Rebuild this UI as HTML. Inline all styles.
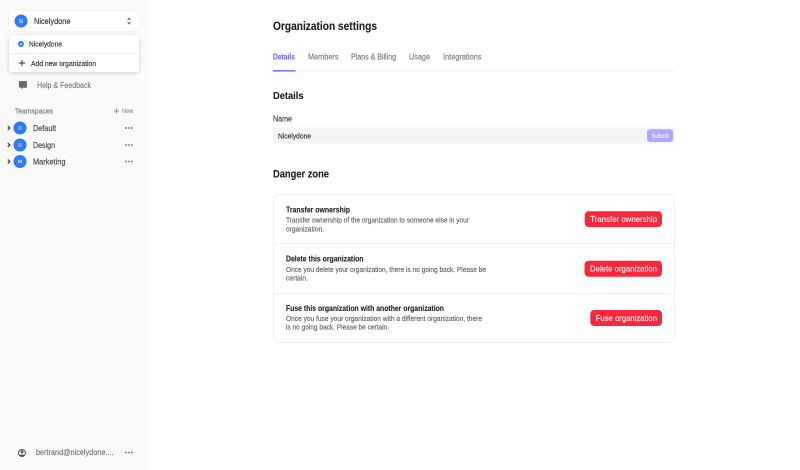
<!DOCTYPE html>
<html><head><meta charset="utf-8"><style>
html,body{margin:0;padding:0;background:#fff;width:800px;height:470px;overflow:hidden}
svg{display:block;filter:blur(.2px)}
text{font-family:"Liberation Sans",sans-serif;fill:currentColor;stroke:currentColor;stroke-width:.16}
.b{font-weight:700;stroke-width:.1}
</style></head><body>
<svg width="800" height="470" viewBox="0 0 800 470" xmlns="http://www.w3.org/2000/svg">
<defs>
<filter id="s" x="-10%" y="-30%" width="120%" height="170%"><feDropShadow dx="0" dy="1" stdDeviation="2" flood-color="#000" flood-opacity=".16"/></filter>
<filter id="s2" x="-10%" y="-30%" width="120%" height="170%"><feDropShadow dx="0" dy="0" stdDeviation="1.2" flood-color="#000" flood-opacity=".07"/></filter>
</defs>
<rect width="800" height="470" fill="#fff"/>
<rect width="148" height="470" fill="#fafafa"/>

<!-- org switcher -->
<rect x="9" y="11" width="130" height="20" rx="6" fill="#fff" filter="url(#s2)"/>
<circle cx="21" cy="21" r="6.5" fill="#2e7bf6"/>
<text x="21" y="22.8" font-size="5" color="#dce9ff" text-anchor="middle">N</text>
<text x="34" y="24" font-size="8.500" color="#333" textLength="36.500" lengthAdjust="spacingAndGlyphs">Nicelydone</text>
<path d="M127.600 20l1.400-1.900 1.400 1.900M127.600 22l1.400 1.900 1.400-1.900" fill="none" stroke="#555" stroke-width=".9"/>

<!-- dropdown -->
<rect x="9" y="35" width="130" height="37" rx="3" fill="#fff" filter="url(#s)"/>
<line x1="9" y1="53.500" x2="139" y2="53.500" stroke="#f0f0f0"/>
<circle cx="21" cy="44" r="3" fill="#2e7bf6"/>
<path d="M19.700 44l1 1 1.700-1.900" fill="none" stroke="#fff" stroke-width=".7"/>
<text x="29" y="46.500" font-size="7.500" color="#333" textLength="33" lengthAdjust="spacingAndGlyphs">Nicelydone</text>
<path d="M22 60v6M19 63h6" stroke="#222" stroke-width=".9" fill="none"/>
<text x="31" y="66" font-size="7.500" color="#333" textLength="65" lengthAdjust="spacingAndGlyphs">Add new organization</text>

<!-- help -->
<path d="M20 81h6q1 0 1 1v4.800q0 1-1 1h-2.800l-1.600 1.600v-1.600h-1.600q-1 0-1-1v-4.800q0-1 1-1z" fill="#6a6a6a"/>
<text x="37" y="88" font-size="8" color="#808080" textLength="54" lengthAdjust="spacingAndGlyphs">Help &amp; Feedback</text>

<!-- teamspaces -->
<text x="15" y="113.500" font-size="7.200" color="#777" textLength="38" lengthAdjust="spacingAndGlyphs">Teamspaces</text>
<path d="M116.500 108.500v5M114 111h5" stroke="#777" stroke-width=".8" fill="none"/>
<text x="122" y="113" font-size="6.200" color="#999" textLength="11" lengthAdjust="spacingAndGlyphs">New</text>

<g fill="none" stroke="#222" stroke-width="1.100">
<path d="M7.800 126l2 2-2 2"/><path d="M7.800 143l2 2-2 2"/><path d="M7.800 159.500l2 2-2 2"/>
</g>
<circle cx="20" cy="128" r="6.500" fill="#2e7bf6"/>
<circle cx="20" cy="145" r="6.500" fill="#2e7bf6"/>
<circle cx="20" cy="161.500" r="6.500" fill="#2e7bf6"/>
<g font-size="4.800" color="#dce9ff" text-anchor="middle">
<text x="20" y="129.700">D</text><text x="20" y="146.700">D</text><text x="20" y="163.200">M</text>
</g>
<g font-size="8.500" color="#444">
<text x="33" y="131" textLength="23" lengthAdjust="spacingAndGlyphs">Default</text>
<text x="33" y="148" textLength="22" lengthAdjust="spacingAndGlyphs">Design</text>
<text x="33" y="164.500" textLength="32.500" lengthAdjust="spacingAndGlyphs">Marketing</text>
</g>
<g fill="#666">
<circle cx="126" cy="128" r=".9"/><circle cx="129" cy="128" r=".9"/><circle cx="132" cy="128" r=".9"/>
<circle cx="126" cy="145" r=".9"/><circle cx="129" cy="145" r=".9"/><circle cx="132" cy="145" r=".9"/>
<circle cx="126" cy="161.500" r=".9"/><circle cx="129" cy="161.500" r=".9"/><circle cx="132" cy="161.500" r=".9"/>
<circle cx="126" cy="452.500" r=".9"/><circle cx="129" cy="452.500" r=".9"/><circle cx="132" cy="452.500" r=".9"/>
</g>

<!-- user -->
<circle cx="22" cy="453" r="3.500" fill="none" stroke="#555" stroke-width="1"/>
<circle cx="22" cy="451.800" r="1.500" fill="#555"/>
<path d="M19.500 455.500q2.500-2.400 5 0l-1 1h-3z" fill="#555"/>
<text x="36" y="455" font-size="8" color="#777" textLength="77.500" lengthAdjust="spacingAndGlyphs">bertrand@nicelydone....</text>

<!-- main header -->
<text x="273" y="30" class="b" font-size="11.500" color="#1c1c1e" textLength="104" lengthAdjust="spacingAndGlyphs">Organization settings</text>
<g font-size="8" color="#7d7d7d">
<text x="273" y="59.500" style="color:#6c63f2" class="b" textLength="22" lengthAdjust="spacingAndGlyphs">Details</text>
<text x="308" y="59.500" textLength="30.500" lengthAdjust="spacingAndGlyphs">Members</text>
<text x="351" y="59.500" textLength="45" lengthAdjust="spacingAndGlyphs">Plans &amp; Billing</text>
<text x="409" y="59.500" textLength="21" lengthAdjust="spacingAndGlyphs">Usage</text>
<text x="443" y="59.500" textLength="38.500" lengthAdjust="spacingAndGlyphs">Integrations</text>
</g>
<rect x="273" y="70.500" width="402" height="1" fill="#f2f2f4"/>
<rect x="273" y="70" width="22.500" height="1.600" fill="#7c74f5"/>

<text x="273" y="99" class="b" font-size="10.500" color="#1c1c1e" textLength="30.500" lengthAdjust="spacingAndGlyphs">Details</text>
<text x="273" y="121.500" font-size="8" color="#444" textLength="19" lengthAdjust="spacingAndGlyphs">Name</text>
<rect x="273" y="127.500" width="402" height="16" rx="3" fill="#f3f4f6"/>
<text x="278" y="138.300" font-size="7.500" color="#333" textLength="33" lengthAdjust="spacingAndGlyphs">Nicelydone</text>
<rect x="647" y="129.300" width="26" height="12.700" rx="3" fill="#aca8fb"/>
<text x="651.500" y="138" font-size="6.200" class="b" color="#e8e7ff" textLength="17.500" lengthAdjust="spacingAndGlyphs">Submit</text>

<text x="273" y="177.500" class="b" font-size="11" color="#1c1c1e" textLength="56" lengthAdjust="spacingAndGlyphs">Danger zone</text>

<!-- card -->
<rect x="273.500" y="194.500" width="401" height="148" rx="6" fill="#fff" stroke="#f0f0f2"/>
<line x1="274" y1="243.500" x2="674" y2="243.500" stroke="#f2f2f4"/>
<line x1="274" y1="293.500" x2="674" y2="293.500" stroke="#f2f2f4"/>

<text x="286" y="212.700" class="b" font-size="7.800" color="#222" textLength="64" lengthAdjust="spacingAndGlyphs">Transfer ownership</text>
<text x="286" y="222.700" font-size="7.500" color="#666" textLength="183" lengthAdjust="spacingAndGlyphs">Transfer ownership of the organization to someone else in your</text>
<text x="286" y="231.500" font-size="7.500" color="#666" textLength="38" lengthAdjust="spacingAndGlyphs">organization.</text>

<text x="286" y="261.700" class="b" font-size="7.800" color="#222" textLength="77.500" lengthAdjust="spacingAndGlyphs">Delete this organization</text>
<text x="286" y="271.800" font-size="7.500" color="#666" textLength="200" lengthAdjust="spacingAndGlyphs">Once you delete your organization, there is no going back. Please be</text>
<text x="286" y="280.500" font-size="7.500" color="#666" textLength="22" lengthAdjust="spacingAndGlyphs">certain.</text>

<text x="286" y="311" class="b" font-size="7.800" color="#222" textLength="158" lengthAdjust="spacingAndGlyphs">Fuse this organization with another organization</text>
<text x="286" y="321" font-size="7.500" color="#666" textLength="196" lengthAdjust="spacingAndGlyphs">Once you fuse your organization with a different organization, there</text>
<text x="286" y="329.700" font-size="7.500" color="#666" textLength="103" lengthAdjust="spacingAndGlyphs">is no going back. Please be certain.</text>

<rect x="584.700" y="211.300" width="77.300" height="15.700" rx="4" fill="#f7283c"/>
<text x="590.300" y="222" font-size="8.500" color="#ffe6e8" textLength="66.700" lengthAdjust="spacingAndGlyphs">Transfer ownership</text>
<rect x="584.500" y="260.700" width="77.500" height="16" rx="4" fill="#f7283c"/>
<text x="590" y="271.500" font-size="8.500" color="#ffe6e8" textLength="67" lengthAdjust="spacingAndGlyphs">Delete organization</text>
<rect x="590.300" y="310" width="71.700" height="16" rx="4" fill="#f7283c"/>
<text x="595.700" y="321" font-size="8.500" color="#ffe6e8" textLength="61.300" lengthAdjust="spacingAndGlyphs">Fuse organization</text>
</svg>
</body></html>
